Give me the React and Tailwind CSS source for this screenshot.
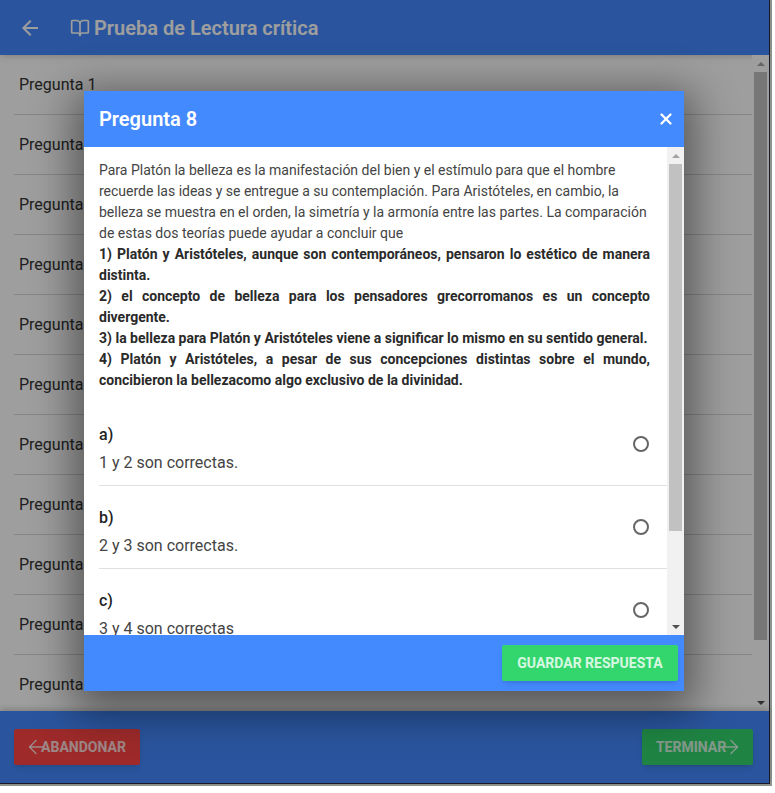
import React from "react";
import { ArrowLeft, ArrowRight, BookOpen, X } from "lucide-react";
import { MdArrowBack } from "react-icons/md";

const questions = [1, 2, 3, 4, 5, 6, 7, 8, 9, 10, 11];

const options = [
  { label: "a)", text: "1 y 2 son correctas." },
  { label: "b)", text: "2 y 3 son correctas." },
  { label: "c)", text: "3 y 4 son correctas" },
];

function Scrollbar({ thumbClass, trackClass, upClass, downClass }) {
  return (
    <div className={`flex w-[17px] shrink-0 flex-col ${trackClass}`}>
      <div className="flex h-[17px] shrink-0 items-center justify-center">
        <div className={`h-0 w-0 border-x-[4px] border-b-[4px] border-x-transparent ${upClass}`} />
      </div>
      <div className="min-h-0 flex-1 px-[2px]">
        <div className={thumbClass} />
      </div>
      <div className="flex h-[17px] shrink-0 items-center justify-center">
        <div className={`h-0 w-0 border-x-[4px] border-t-[4px] border-x-transparent ${downClass}`} />
      </div>
    </div>
  );
}

function Modal() {
  return (
    <div className="absolute left-[84px] top-[91px] flex h-[600px] w-[600px] flex-col bg-white shadow-[0_11px_40px_10px_rgba(0,0,0,0.45)]">
      <div className="flex h-[56px] shrink-0 items-center justify-between bg-[#448aff] pl-[15px] pr-[9px] text-white">
        <div className="text-[20px] font-semibold">Pregunta 8</div>
        <X size={18} strokeWidth={3} />
      </div>
      <div className="flex min-h-0 flex-1">
        <div className="min-w-0 flex-1 overflow-hidden pl-[15px]">
          <div className="w-[551px] pt-[13px] text-[14px] leading-[21px] text-[#444]">
            <div>
              Para Platón la belleza es la manifestación del bien y el estímulo para que el hombre
              recuerde las ideas y se entregue a su contemplación. Para Aristóteles, en cambio, la
              belleza se muestra en el orden, la simetría y la armonía entre las partes. La comparación
              de estas dos teorías puede ayudar a concluir que
            </div>
            <div className="text-justify font-bold text-[#2a2a2a]">
              <div>1) Platón y Aristóteles, aunque son contemporáneos, pensaron lo estético de manera distinta.</div>
              <div>2) el concepto de belleza para los pensadores grecorromanos es un concepto divergente.</div>
              <div>3) la belleza para Platón y Aristóteles viene a significar lo mismo en su sentido general.</div>
              <div>4) Platón y Aristóteles, a pesar de sus concepciones distintas sobre el mundo, concibieron la bellezacomo algo exclusivo de la divinidad.</div>
            </div>
          </div>
          <div className="mt-[12px]">
            {options.map((o) => (
              <div key={o.label} className="flex h-[83px] shrink-0 items-start justify-between border-b border-[#e0e0e0] pt-[18px]">
                <div className="text-[16px] leading-[28px] text-[#444]">
                  <div className="font-medium text-[#222]">{o.label}</div>
                  <div>{o.text}</div>
                </div>
                <div className="mr-[18px] mt-[15px] h-[16px] w-[16px] rounded-full border-2 border-[#666]" />
              </div>
            ))}
          </div>
        </div>
        <Scrollbar
          trackClass="bg-[#f1f1f1]"
          thumbClass="h-[367px] bg-[#c1c1c1]"
          upClass="border-b-[#a3a3a3]"
          downClass="border-t-[#505050]"
        />
      </div>
      <div className="flex h-[56px] shrink-0 items-center justify-end bg-[#448aff] pr-[6px]">
        <button className="h-[36px] w-[176px] rounded-[2px] bg-[#33d66c] text-[14px] font-bold text-white/80 shadow-md">
          GUARDAR RESPUESTA
        </button>
      </div>
    </div>
  );
}

export default function App() {
  return (
    <div className="relative h-[793px] w-[775px] overflow-hidden bg-white font-['Roboto',sans-serif]">
      <div className="h-[786px] w-[772px] border-r-2 border-b-2 border-[#8f948c]">
        <div className="relative flex h-[784px] w-[770px] flex-col border-r border-b border-[#1a1a2a] bg-white">
          <div className="flex h-[55px] shrink-0 items-center bg-[#448aff] pl-[18px] text-white shadow-md">
            <MdArrowBack size={24} />
            <BookOpen size={20} strokeWidth={2} className="ml-[28px]" />
            <div className="ml-[4px] text-[20px] font-semibold">Prueba de Lectura crítica</div>
          </div>
          <div className="flex min-h-0 flex-1">
            <div className="min-w-0 flex-1 overflow-hidden pl-[14px]">
              {questions.map((n) => (
                <div key={n} className="flex h-[60px] shrink-0 items-center border-b border-[#d8d8d8] pl-[5px] pt-[1px] text-[16px] text-[#333]">
                  Pregunta {n}
                </div>
              ))}
            </div>
            <Scrollbar
              trackClass="bg-white"
              thumbClass="h-[568px] bg-[#c1c1c1]"
              upClass="border-b-[#a3a3a3]"
              downClass="border-t-[#505050]"
            />
          </div>
          <div className="flex h-[72px] shrink-0 items-center justify-between bg-[#448aff] pl-[14px] pr-[16px] shadow-[0_-2px_6px_rgba(0,0,0,0.2)]">
            <button className="flex h-[36px] w-[126px] items-center justify-center rounded-[2px] bg-[#ff4545] text-[14px] font-bold text-white/80 shadow-md">
              <ArrowLeft size={22} strokeWidth={1.5} className="-ml-[3px] -mr-[6px]" />
              ABANDONAR
            </button>
            <button className="flex h-[36px] w-[111px] items-center justify-center rounded-[2px] bg-[#33d66c] text-[14px] font-bold text-white/80 shadow-md">
              TERMINAR
              <ArrowRight size={22} strokeWidth={1.5} className="-ml-[6px] -mr-[3px]" />
            </button>
          </div>
          <div className="absolute inset-0 bg-black/[0.38]" />
        </div>
      </div>
      <Modal />
    </div>
  );
}
